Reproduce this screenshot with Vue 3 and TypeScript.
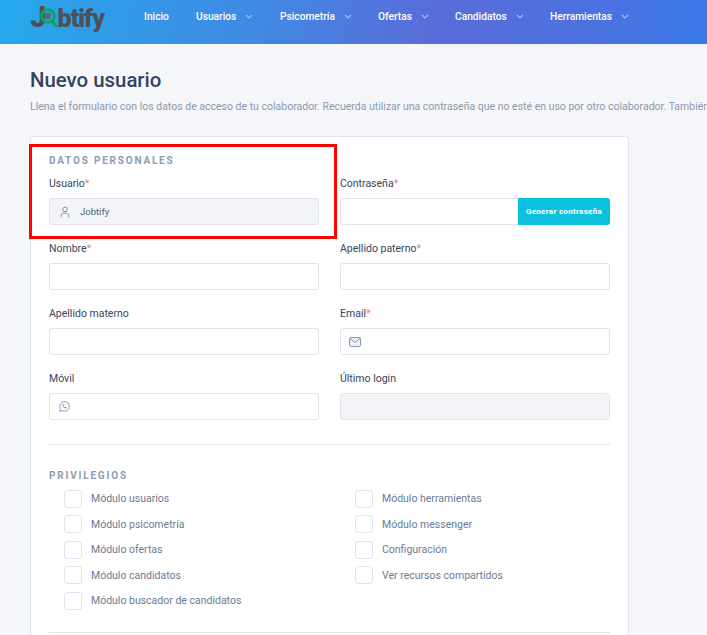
<script setup lang="ts">
const nav = [
  { label: 'Inicio', caret: false, w: 52 },
  { label: 'Usuarios', caret: true, w: 84 },
  { label: 'Psicometría', caret: true, w: 98 },
  { label: 'Ofertas', caret: true, w: 77 },
  { label: 'Candidatos', caret: true, w: 95 },
  { label: 'Herramientas', caret: true, w: 90 },
]
const left = ['Módulo usuarios', 'Módulo psicometría', 'Módulo ofertas', 'Módulo candidatos', 'Módulo buscador de candidatos']
const right = ['Módulo herramientas', 'Módulo messenger', 'Configuración', 'Ver recursos compartidos']
</script>

<template>
  <div class="page">
    <header class="topbar">
      <div class="logo">
        <span class="logo-j">J</span>
        <svg class="lens" width="20" height="22" viewBox="0 0 20 22" aria-hidden="true">
          <circle cx="9" cy="9" r="6.4" fill="none" stroke="#0ea35a" stroke-width="2.8" />
          <circle cx="9" cy="9" r="3.2" fill="#4b6f80" />
          <path d="M13 14l4 5" stroke="#0ea35a" stroke-width="3.4" stroke-linecap="round" />
        </svg>
        <span class="logo-rest">btify</span>
      </div>
      <nav class="menu">
        <div v-for="n in nav" :key="n.label" class="menu-item" :style="{ width: n.w + 'px' }">
          <span>{{ n.label }}</span>
          <svg v-if="n.caret" class="caret" width="8" height="5" viewBox="0 0 8 5" aria-hidden="true">
            <path d="M1 1l3 3 3-3" fill="none" stroke="#a9bdf0" stroke-width="1.1" />
          </svg>
        </div>
      </nav>
    </header>

    <main class="content">
      <h1>Nuevo usuario</h1>
      <p class="intro">Llena el formulario con los datos de acceso de tu colaborador. Recuerda utilizar una contraseña que no esté en uso por otro colaborador. También puedes asignar sus privilegios.</p>

      <section class="card">
        <h2 class="section-title first">DATOS PERSONALES</h2>
        <div class="form-grid">
          <div class="field">
            <label>Usuario<i>*</i></label>
            <div class="input disabled with-icon wide-icon">
              <svg width="12" height="12" viewBox="0 0 12 12" aria-hidden="true">
                <circle cx="6" cy="3.4" r="2.3" fill="none" stroke="#7f8ea6" stroke-width="1" />
                <path d="M2.200 11.500V9.600C2.200 8 3.200 7.200 4.400 7.200h3.200c1.200 0 2.200.8 2.200 2.400v1.900" fill="none" stroke="#7f8ea6" stroke-width="1" />
              </svg>
              <span>Jobtify</span>
            </div>
          </div>
          <div class="field">
            <label>Contraseña<i>*</i></label>
            <div class="group">
              <div class="input joined"></div>
              <button class="generate" type="button">Generar contraseña</button>
            </div>
          </div>
          <div class="field">
            <label>Nombre<i>*</i></label>
            <div class="input"></div>
          </div>
          <div class="field">
            <label>Apellido paterno<i>*</i></label>
            <div class="input"></div>
          </div>
          <div class="field">
            <label>Apellido materno</label>
            <div class="input"></div>
          </div>
          <div class="field">
            <label>Email<i>*</i></label>
            <div class="input with-icon">
              <svg class="mail" width="12" height="10" viewBox="0 0 12 10" aria-hidden="true">
                <rect x=".5" y=".5" width="11" height="9" rx="1.2" fill="#eef1f6" stroke="#8494ab" />
                <path d="M1 1.500l5 4 5-4" fill="none" stroke="#8494ab" />
              </svg>
            </div>
          </div>
          <div class="field">
            <label>Móvil</label>
            <div class="input with-icon">
              <svg width="11" height="11" viewBox="0 0 12 12" aria-hidden="true">
                <path d="M.8 11.200l.8-2.800A5.200 5.200 0 1 1 3.600 10.400z" fill="none" stroke="#7b93ad" stroke-width="1" />
                <path d="M4.200 3.400c-.7.6-.6 1.700.3 2.900.9 1.200 2.200 2 3.200 1.700l.7-.9-1.300-.8-.6.5c-.8-.3-1.400-1-1.700-1.700l.5-.6-.5-1.300z" fill="#7b93ad" />
              </svg>
            </div>
          </div>
          <div class="field">
            <label>Último login</label>
            <div class="input disabled"></div>
          </div>
        </div>

        <hr class="rule rule-a" />

        <h2 class="section-title">PRIVILEGIOS</h2>
        <div class="privileges">
          <div class="priv-col">
            <div v-for="p in left" :key="p" class="check-row"><span class="box"></span><span>{{ p }}</span></div>
          </div>
          <div class="priv-col">
            <div v-for="p in right" :key="p" class="check-row"><span class="box"></span><span>{{ p }}</span></div>
          </div>
        </div>

        <hr class="rule rule-b" />
      </section>

      <div class="highlight"></div>
    </main>
  </div>
</template>

<style>
html, body { margin: 0; background: #f5f6fa; overflow: hidden; }
</style>

<style scoped>
.page {
  width: 707px;
  height: 635px;
  overflow: hidden;
  background: #f5f6fa;
  font-family: Roboto, "Liberation Sans", sans-serif;
}
.topbar {
  height: 44px;
  display: flex;
  background: linear-gradient(100deg, #25a9ec 0%, #3f8ae4 35%, #5a6cd9 62%, #4a72e0 85%, #3a79e8 100%);
}
.logo {
  box-sizing: border-box;
  width: 114px;
  margin-left: 30px;
  height: 33px;
  padding-top: 3px;
  display: flex;
  align-items: baseline;
  font-weight: 900;
  color: #4f4f55;
  filter: blur(.4px);
}
.logo-j { font-size: 29px; line-height: 29px; letter-spacing: -2px; }
.logo-rest { font-size: 25px; line-height: 29px; letter-spacing: -1px; }
.lens { align-self: flex-start; margin: 4px -2px 0 -5px; flex: none; }
.menu { display: flex; height: 33px; align-items: center; }
.menu-item {
  display: flex;
  align-items: center;
  gap: 9px;
  color: #fff;
  font-size: 10.2px;
  font-weight: 500;
  white-space: nowrap;
}
.caret { flex: none; }
.content { position: relative; padding: 0 30px; }
h1 {
  margin: 0;
  padding-top: 23px;
  font-size: 20.4px;
  line-height: 26px;
  font-weight: 500;
  color: #36445c;
}
.intro {
  margin: 7px 0 0;
  width: 800px;
  white-space: nowrap;
  font-size: 10.5px;
  line-height: 14px;
  color: #8c99ad;
}
.card {
  box-sizing: border-box;
  width: 599px;
  margin-top: 22px;
  padding: 17px 18px 30px;
  background: #fff;
  border: 1px solid #dfe3ee;
  border-radius: 4px;
}
.section-title {
  margin: 0;
  font-size: 10px;
  line-height: 13px;
  font-weight: 700;
  letter-spacing: 1.8px;
  color: #8b9cb3;
}
.form-grid {
  display: grid;
  grid-template-columns: 270px 270px;
  column-gap: 21px;
  margin-top: 9px;
}
.field { height: 65px; }
label {
  display: block;
  height: 15px;
  margin-bottom: 7px;
  font-size: 10.5px;
  line-height: 15px;
  color: #36445c;
}
label i { font-style: normal; color: #f07c8a; }
.input {
  box-sizing: border-box;
  height: 27px;
  display: flex;
  align-items: center;
  padding-left: 9px;
  background: #fff;
  border: 1px solid #dfe3ee;
  border-radius: 3px;
  font-size: 9.5px;
  color: #54627a;
}
.input.disabled { background: #f3f4f8; }
.with-icon svg { flex: none; }
.wide-icon svg { margin-right: 9px; }
.mail { margin-left: -1px; }
.group { display: flex; }
.joined { flex: 1; border-right: 0; border-radius: 3px 0 0 3px; }
.generate {
  width: 92px;
  height: 27px;
  padding: 0;
  border: 0;
  border-radius: 0 3px 3px 0;
  background: #0bc1de;
  color: #fff;
  font-family: inherit;
  font-size: 8px;
  font-weight: 700;
  letter-spacing: .3px;
}
.rule { height: 1px; margin: 0; border: 0; background: #dfe3ee; }
.rule-a { margin-top: 8px; }
.rule-a + .section-title { margin-top: 24px; }
.section-title + .privileges { margin-top: 4px; }
.privileges {
  display: grid;
  grid-template-columns: 270px 270px;
  column-gap: 21px;
}
.priv-col { padding-left: 15px; }
.check-row {
  display: flex;
  align-items: center;
  height: 25.5px;
  gap: 9px;
  font-size: 10.5px;
  color: #6b7a93;
}
.box {
  box-sizing: border-box;
  width: 18px;
  height: 18px;
  border: 1px solid #dfe3ee;
  border-radius: 3px;
  background: #fff;
}
.rule-b { margin-top: 18px; }
.highlight {
  position: absolute;
  left: 29px;
  top: 100px;
  width: 308px;
  height: 95px;
  box-sizing: border-box;
  border: 3px solid #f00;
  pointer-events: none;
}
</style>
